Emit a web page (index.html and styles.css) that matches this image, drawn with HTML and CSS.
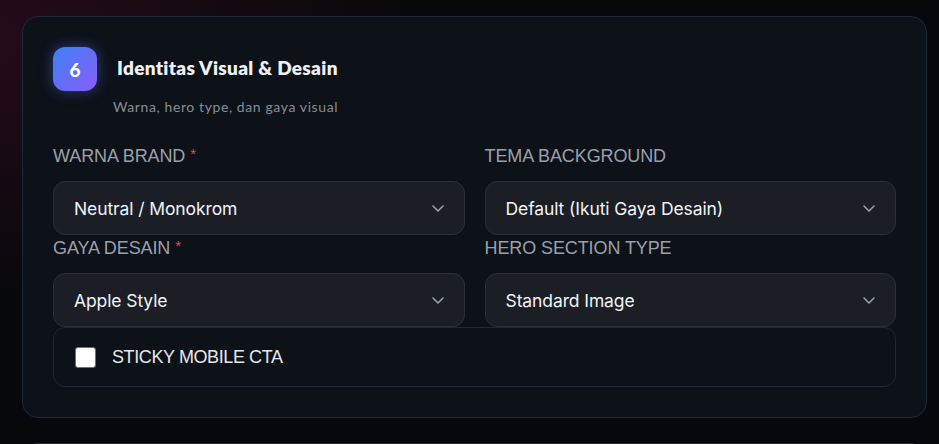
FILE: index.html
```html
<!DOCTYPE html>
<html lang="id">
<head>
<meta charset="utf-8">
<title>Identitas Visual &amp; Desain</title>
<link rel="stylesheet" href="styles.css">
</head>
<body>
<div class="page">
  <section class="card">
    <div class="header">
      <div class="badge">6</div>
      <div class="head-text">
        <h2 class="title">Identitas Visual &amp; Desain</h2>
        <p class="subtitle">Warna, hero type, dan gaya visual</p>
      </div>
    </div>
    <div class="grid">
      <div class="field">
        <label class="label">WARNA BRAND <span class="req">*</span></label>
        <div class="select"><span>Neutral / Monokrom</span><svg class="chev" viewBox="0 0 12 7" width="12" height="7"><path d="M1 1L6 6L11 1" fill="none" stroke="#9ca3af" stroke-width="1.5" stroke-linecap="round" stroke-linejoin="round"/></svg></div>
      </div>
      <div class="field">
        <label class="label">TEMA BACKGROUND</label>
        <div class="select"><span>Default (Ikuti Gaya Desain)</span><svg class="chev" viewBox="0 0 12 7" width="12" height="7"><path d="M1 1L6 6L11 1" fill="none" stroke="#9ca3af" stroke-width="1.5" stroke-linecap="round" stroke-linejoin="round"/></svg></div>
      </div>
      <div class="field">
        <label class="label">GAYA DESAIN <span class="req">*</span></label>
        <div class="select"><span>Apple Style</span><svg class="chev" viewBox="0 0 12 7" width="12" height="7"><path d="M1 1L6 6L11 1" fill="none" stroke="#9ca3af" stroke-width="1.5" stroke-linecap="round" stroke-linejoin="round"/></svg></div>
      </div>
      <div class="field">
        <label class="label">HERO SECTION TYPE</label>
        <div class="select"><span>Standard Image</span><svg class="chev" viewBox="0 0 12 7" width="12" height="7"><path d="M1 1L6 6L11 1" fill="none" stroke="#9ca3af" stroke-width="1.5" stroke-linecap="round" stroke-linejoin="round"/></svg></div>
      </div>
    </div>
    <label class="check-row">
      <span class="checkbox"></span>
      <span class="check-label">STICKY MOBILE CTA</span>
    </label>
  </section>
  <section class="card next"></section>
</div>
</body>
</html>
```
FILE: styles.css
```css
* { box-sizing: border-box; }
html, body { margin: 0; height: 100%; }
body {
  background:
    radial-gradient(ellipse 420px 260px at 0 40px, rgba(60, 14, 36, 0.55), rgba(60, 14, 36, 0) 100%),
    #07080c;
  overflow: hidden;
  font-family: "Liberation Sans", Arial, sans-serif;
}
.page {
  padding: 16px 12px 0 22px;
}
.card {
  background: #0d1118;
  border: 1px solid #1f2835;
  border-radius: 16px;
  padding: 30px;
}
.card.next {
  margin-top: 25px;
  height: 120px;
}
.header {
  display: flex;
  gap: 16px;
  margin-bottom: 26px;
}
.badge {
  width: 44px;
  height: 44px;
  flex: none;
  border-radius: 12px;
  background: linear-gradient(135deg, #3b82f6 0%, #8b5cf6 100%);
  box-shadow: 0 0 14px rgba(79, 120, 246, 0.45);
  color: #fff;
  font-family: "Lato", sans-serif;
  font-weight: 900;
  font-size: 19px;
  display: flex;
  align-items: center;
  justify-content: center;
}
.head-text { display: flex; flex-direction: column; }
.title {
  margin: 0 0 0 4px;
  font-family: "Lato", sans-serif;
  font-weight: 800;
  font-size: 19px;
  letter-spacing: 0.3px;
  line-height: 42px;
  color: #eef0f4;
}
.subtitle {
  margin: 8px 0 0;
  font-family: "Lato", sans-serif;
  font-size: 14px;
  letter-spacing: 0.6px;
  line-height: 20px;
  color: #868d9a;
}
.grid {
  display: grid;
  grid-template-columns: 1fr 1fr;
  column-gap: 20px;
}
.label {
  display: block;
  font-size: 18px;
  line-height: 27px;
  letter-spacing: -0.1px;
  color: #9aa0ab;
  margin-bottom: 11px;
}
.req { color: #ef4444; font-size: 15px; vertical-align: top; line-height: 22px; }
.select {
  height: 54px;
  background: #1b1e25;
  border: 1px solid #2b2f38;
  border-radius: 12px;
  display: flex;
  align-items: center;
  justify-content: space-between;
  padding: 0 20px;
  font-family: "Inter", sans-serif;
  font-size: 17.5px;
  letter-spacing: -0.1px;
  color: #f1f3f6;
}
.chev { flex: none; }
.check-row {
  display: flex;
  align-items: center;
  gap: 16px;
  border: 1px solid #1f2835;
  border-radius: 12px;
  padding: 18px 21px;
}
.checkbox {
  width: 21px;
  height: 21px;
  background: #fff;
  border: 1.5px solid #6b6f76;
  border-radius: 3px;
  flex: none;
}
.check-label {
  font-size: 18px;
  line-height: 22px;
  letter-spacing: -0.4px;
  color: #e6e8ec;
}
```
